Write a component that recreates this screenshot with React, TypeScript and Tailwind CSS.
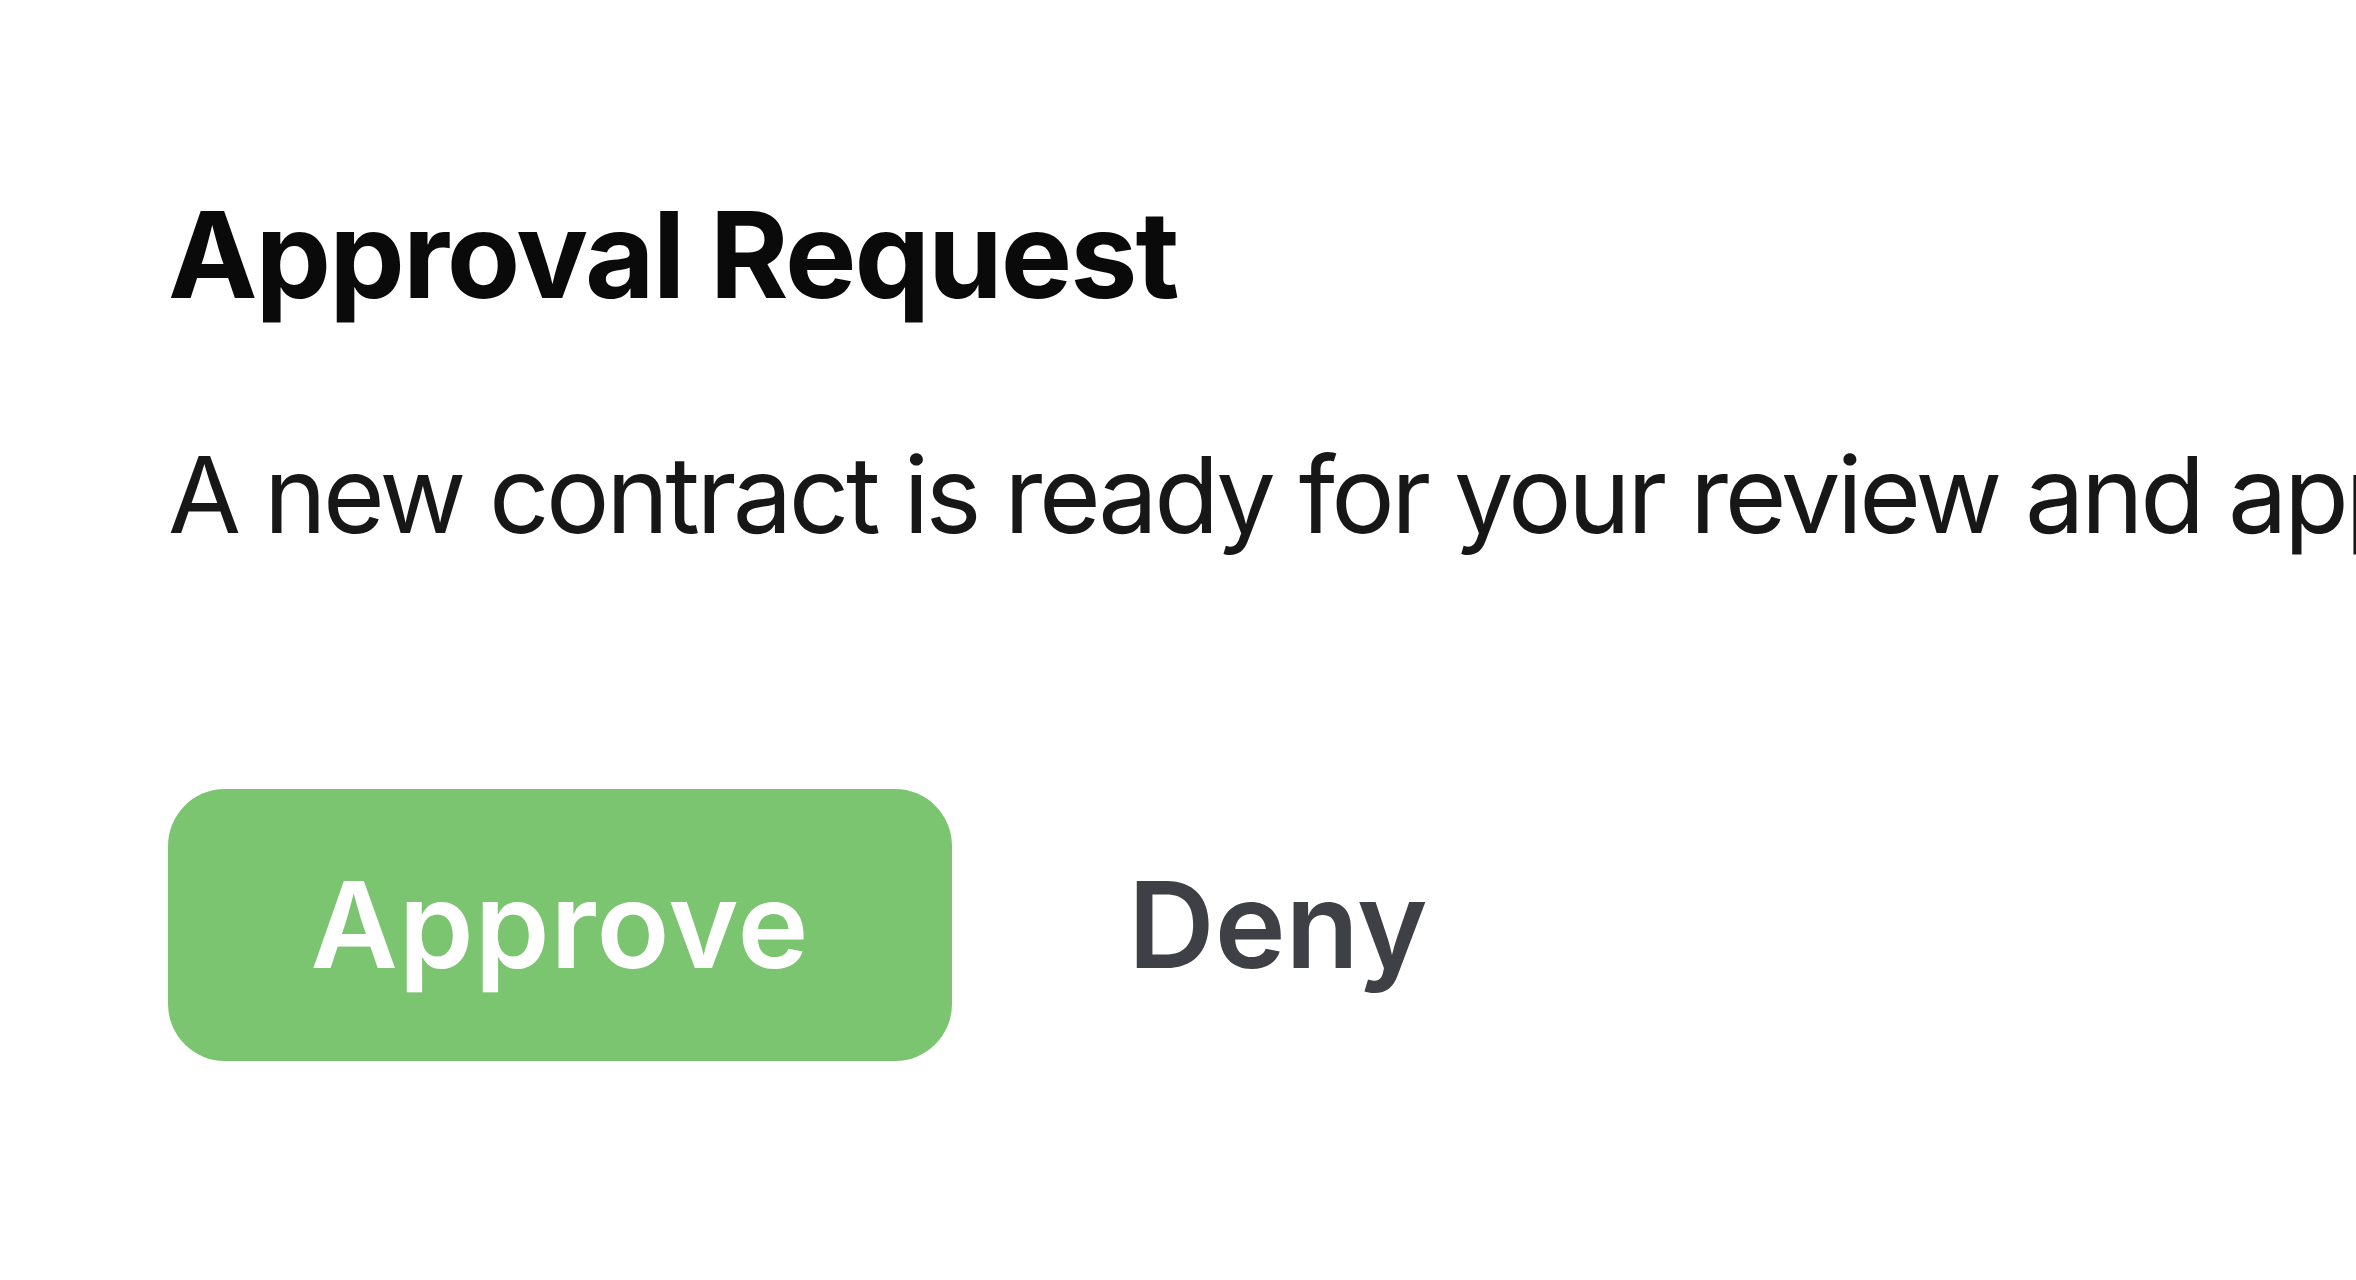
import React from 'react';

const App: React.FC = () => {
    return (
        <div className="min-h-screen bg-white overflow-hidden font-['Inter',sans-serif]">
            <div className="pl-[168px] pt-[195px]">
                <h1 className="text-[120px] leading-[1] font-bold text-[#0a0a0a] tracking-[-2px]">Approval Request</h1>
                <p className="mt-[127px] text-[106px] leading-[1] text-[#171717] whitespace-nowrap tracking-[-3.5px]">
                    A new contract is ready for your review and approval.
                </p>
                <div className="mt-[241px] flex items-center gap-[32px]">
                    <button className="w-[784px] h-[272px] rounded-[57px] bg-[#7bc470] text-white text-[120px] font-semibold leading-[1] tracking-[1px]">
                        Approve
                    </button>
                    <button className="h-[272px] px-[144px] text-[#3f3f46] text-[120px] font-semibold leading-[1]">
                        Deny
                    </button>
                </div>
            </div>
        </div>
    );
};

export default App;
